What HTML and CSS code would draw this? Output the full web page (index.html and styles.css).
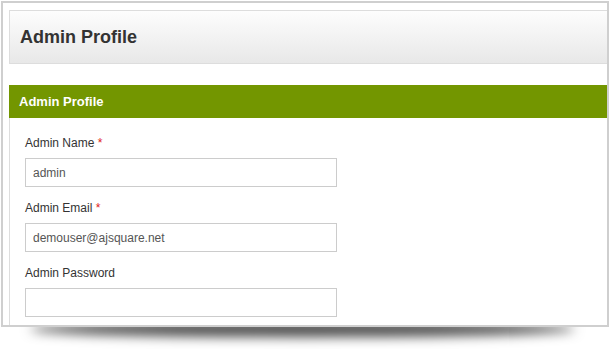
FILE: index.html
```html
<!DOCTYPE html>
<html lang="en">
<head>
    <meta charset="UTF-8">
    <meta name="viewport" content="width=device-width, initial-scale=1.0">
    <title>Admin Profile</title>
    <link rel="stylesheet" href="styles.css">
</head>
<body>
    <div class="shot">
        <div class="shadow"></div>
        <div class="frame">
            <div class="page-head"><h1>Admin Profile</h1></div>
            <div class="panel">
                <div class="panel-title">Admin Profile</div>
                <div class="panel-body">
                    <label>Admin Name <span class="req">*</span></label>
                    <input type="text" value="admin">
                    <label>Admin Email <span class="req">*</span></label>
                    <input type="text" value="demouser@ajsquare.net">
                    <label>Admin Password</label>
                    <input type="password">
                </div>
            </div>
        </div>
    </div>
</body>
</html>
```
FILE: styles.css
```css
body { margin: 0; background: #fff; font-family: "Liberation Sans", Arial, sans-serif; color: #333; }
.shot { position: relative; width: 611px; height: 349px; overflow: hidden; }
.shadow { position: absolute; left: 30px; top: 305px; width: 545px; height: 16px; box-shadow: 0 16px 12px rgba(0,0,0,0.7); border-radius: 50%; z-index: 0; }
.frame { position: relative; z-index: 1; margin: 1px 0 0 1px; width: 598px; height: 315px; padding: 7px 0 0 6px; border: 2px solid #cfcfcf; background: #fff; overflow: hidden; }
.page-head { height: 52px; border: 1px solid #ddd; border-right: none; background: linear-gradient(#fdfdfd, #e8e8e8); display: flex; align-items: center; padding-left: 10px; }
.page-head h1 { margin: 0; font-size: 18px; font-weight: bold; color: #333; }
.panel { margin-top: 21px; border-left: 1px solid #ddd; }
.panel-title { height: 33px; margin-left: -1px; background: #739600; color: #fff; font-size: 13px; font-weight: bold; display: flex; align-items: center; padding-left: 10px; }
.panel-body { padding: 18px 0 0 15px; display: flex; flex-direction: column; align-items: flex-start; }
label { font-size: 12px; line-height: 15px; margin-bottom: 7px; color: #333; }
.req { color: #e02020; }
input { box-sizing: border-box; width: 312px; height: 29px; border: 1px solid #ccc; padding: 0 7px; margin: 0 0 14px; font-family: "Liberation Sans", Arial, sans-serif; font-size: 12px; color: #555; }
```
